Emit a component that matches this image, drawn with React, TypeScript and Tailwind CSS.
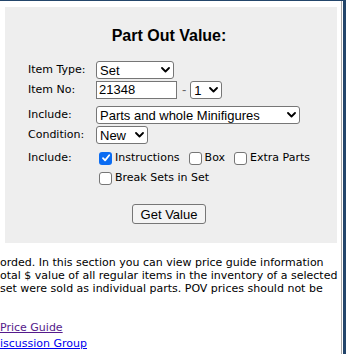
import React from 'react';

const Chevron = () => (
  <svg width="9" height="6" viewBox="0 0 9 6" className="shrink-0">
    <path d="M1 1 L4.5 4.5 L8 1" fill="none" stroke="#000" strokeWidth="1.8" strokeLinecap="round" strokeLinejoin="round" />
  </svg>
);

const Select = ({ value, width }: { value: string; width: string }) => (
  <div
    className={`${width} h-[18px] flex items-center justify-between pl-[3px] pr-[3px] bg-white border border-[#767676] rounded-[3px] text-[13px] leading-none text-black font-['Liberation_Sans',Arial,sans-serif]`}
  >
    <span>{value}</span>
    <Chevron />
  </div>
);

const Check = ({ label, checked }: { label: string; checked?: boolean }) => (
  <label className="flex items-center">
    {checked ? (
      <span className="w-[13px] h-[13px] ml-[4px] mr-[3px] rounded-[3px] bg-[#0b6cf2] flex items-center justify-center">
        <svg width="10" height="10" viewBox="0 0 10 10">
          <path d="M2 5.2 L4.1 7.4 L8.2 2.2" fill="none" stroke="#fff" strokeWidth="1.8" strokeLinecap="round" strokeLinejoin="round" />
        </svg>
      </span>
    ) : (
      <span className="w-[13px] h-[13px] ml-[4px] mr-[3px] rounded-[3px] bg-white border border-[#767676]" />
    )}
    <span>{label}</span>
  </label>
);

export default function App() {
  return (
    <div className="w-[346px] h-[354px] overflow-hidden bg-white flex font-['DejaVu_Sans',Verdana,sans-serif] text-black">
      {/* main column */}
      <div className="w-[341px] shrink-0 border-t border-[#23456a] overflow-hidden">
        {/* Part out value box */}
        <div className="mt-[6px] ml-[5px] mr-[4px] h-[236px] bg-[#eeeeee] pr-[4px]">
          <h2 className="pt-[20px] text-center text-[16px] leading-[18px] font-bold font-['Liberation_Sans',Arial,sans-serif]">
            Part Out Value:
          </h2>

          <div className="mt-[16px] pl-[23px] text-[11px]">
            <div className="flex items-center h-[18px]">
              <span className="w-[68px]">Item Type:</span>
              <Select value="Set" width="w-[78px]" />
            </div>
            <div className="flex items-center h-[18px] mt-[2px]">
              <span className="w-[68px]">Item No:</span>
              <div className="w-[81px] h-[18px] flex items-center pl-[2px] bg-white border border-[#767676] text-[13px] font-['Liberation_Sans',Arial,sans-serif]">
                21348
              </div>
              <span className="ml-[5px] mr-[4px] text-[13px] text-[#666] font-['Liberation_Sans',Arial,sans-serif]">-</span>
              <Select value="1" width="w-[32px]" />
            </div>
            <div className="flex items-center h-[18px] mt-[7px]">
              <span className="w-[68px]">Include:</span>
              <Select value="Parts and whole Minifigures" width="w-[204px]" />
            </div>
            <div className="flex items-center h-[18px] mt-[2px]">
              <span className="w-[68px]">Condition:</span>
              <Select value="New" width="w-[52px]" />
            </div>
            <div className="flex items-center h-[16px] mt-[6px]">
              <span className="w-[67px]">Include:</span>
              <div className="flex items-center gap-[5px]">
                <Check label="Instructions" checked />
                <Check label="Box" />
                <Check label="Extra Parts" />
              </div>
            </div>
            <div className="flex items-center h-[16px] mt-[4px]">
              <span className="w-[67px]" />
              <Check label="Break Sets in Set" />
            </div>
          </div>

          <div className="mt-[18px] flex justify-center">
            <button className="w-[74px] h-[20px] bg-[#f4f4f4] border border-[#767676] rounded-[3px] text-[13px] leading-none font-['Liberation_Sans',Arial,sans-serif]">
              Get Value
            </button>
          </div>
        </div>

        {/* description */}
        <div className="mt-[13px] text-[11px] leading-[13px] whitespace-nowrap">
          <p>orded. In this section you can view price guide information</p>
          <p>otal $ value of all regular items in the inventory of a selected</p>
          <p>set were sold as individual parts. POV prices should not be</p>
        </div>

        <div className="mt-[25px] text-[11px] leading-[16px] whitespace-nowrap">
          <div>
            <a className="text-[#551a8b] underline">Price Guide</a>
          </div>
          <div>
            <a className="text-[#0000ee] underline">iscussion Group</a>
          </div>
        </div>
      </div>

      {/* right frame edge */}
      <div className="w-px h-full bg-[#a8a8a8] border-t border-[#23456a]" />
      <div className="w-px h-full bg-white border-t border-[#23456a]" />
      <div className="flex-1 h-full bg-[#23456a]" />
    </div>
  );
}
